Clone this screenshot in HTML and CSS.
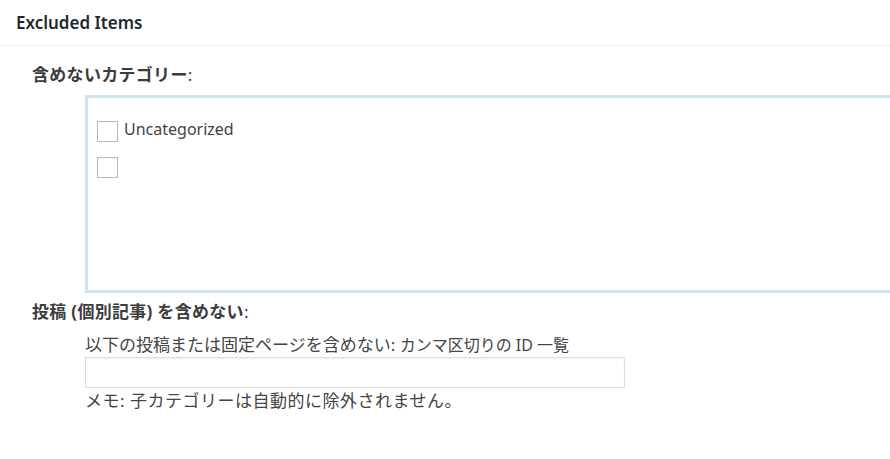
FILE: index.html
```html
<!DOCTYPE html>
<html lang="ja">
<head>
<meta charset="utf-8">
<link rel="stylesheet" href="styles.css">
</head>
<body>
<div class="panel">
  <div class="panel-head">Excluded Items</div>
  <div class="panel-body">
    <div class="field-label">含めないカテゴリー<span class="colon">:</span></div>
    <div class="cat-box">
      <label class="cat-row"><span class="cb"></span><span class="cat-name">Uncategorized</span></label>
      <label class="cat-row"><span class="cb"></span></label>
    </div>
    <div class="field-label second">投稿 (個別記事) を含めない<span class="colon">:</span></div>
    <div class="posts">
      <div class="desc">以下の投稿または固定ページを含めない<span class="colon">:</span> <span class="small">カンマ区切りの ID 一覧</span></div>
      <div class="text-input"></div>
      <div class="note">メモ<span class="colon">:</span> 子カテゴリーは自動的に除外されません。</div>
    </div>
  </div>
</div>
</body>
</html>
```

FILE: styles.css
```css
html, body {
  margin: 0;
  padding: 0;
  background: #fff;
  overflow: hidden;
}
body {
  font-family: "Noto Sans", "Noto Sans CJK JP", sans-serif;
  color: #444;
}
.panel-head {
  height: 46px;
  box-sizing: border-box;
  border-bottom: 1px solid #eeeeee;
  padding-left: 16px;
  font-size: 17px;
  font-weight: 600;
  color: #23282d;
  line-height: 45px;
}
.panel-body {
  padding-left: 32px;
}
.field-label {
  font-weight: 700;
  font-size: 17px;
  line-height: 24px;
  margin-top: 17px;
  color: #3c3c3c;
  letter-spacing: 0.3px;
}
.colon {
  font-weight: 400;
}
.cat-box {
  margin-top: 8px;
  margin-left: 53px;
  width: 900px;
  height: 198px;
  box-sizing: border-box;
  border: 3px solid #d0e3f0;
  padding: 23px 9px;
  display: flex;
  flex-direction: column;
  gap: 15px;
}
.cat-row {
  display: flex;
  align-items: center;
  height: 21px;
  gap: 6px;
}
.cb {
  width: 21px;
  height: 21px;
  box-sizing: border-box;
  border: 1px solid #b4b9be;
  background: #fff;
}
.cat-name {
  font-size: 16px;
  line-height: 21px;
  margin-top: -4px;
  color: #444;
}
.field-label.second {
  margin-top: 7px;
}
.posts {
  padding-left: 53px;
  margin-top: 10px;
}
.desc {
  font-size: 17px;
  line-height: 21px;
  color: #444;
}
.desc .small {
  font-size: 16px;
}
.text-input {
  width: 540px;
  height: 31px;
  box-sizing: border-box;
  border: 1px solid #ddd;
  box-shadow: inset 0 1px 2px rgba(0,0,0,0.07);
  margin-top: 1px;
}
.note {
  font-size: 17px;
  line-height: 26px;
  letter-spacing: 0.5px;
}
```
